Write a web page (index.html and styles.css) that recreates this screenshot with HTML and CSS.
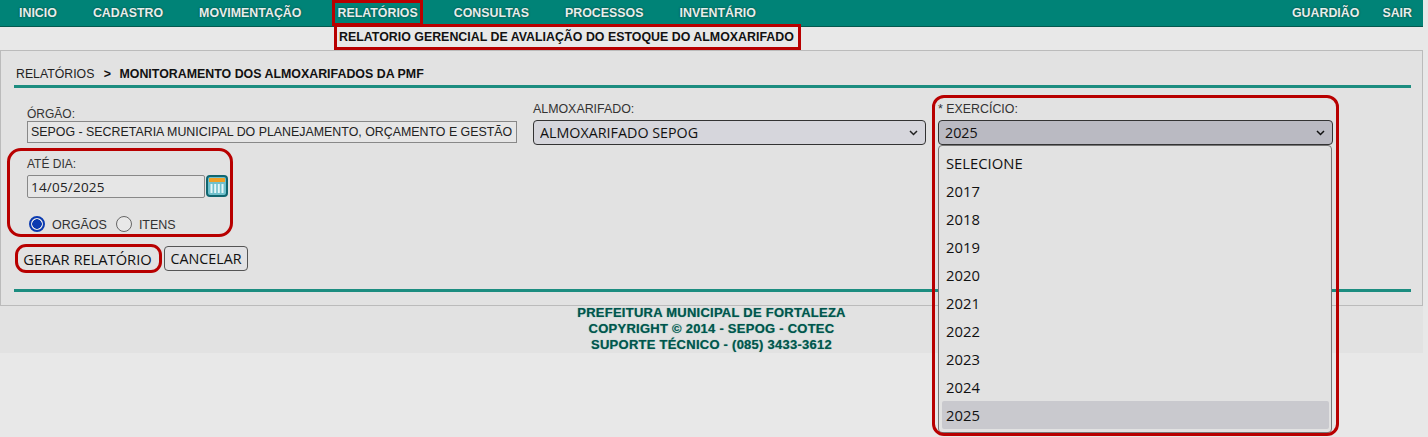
FILE: index.html
```html
<!DOCTYPE html>
<html lang="en">
  <head>
    <meta charset="UTF-8" />
    <title>Monitoramento dos Almoxarifados da PMF</title>
    <link rel="stylesheet" href="styles.css">
  </head>
  <body>
    <div class="page">
      <nav class="topbar">
        <a class="top-link">INICIO</a>
        <a class="top-link">CADASTRO</a>
        <a class="top-link">MOVIMENTAÇÃO</a>
        <a class="top-link marked">RELATÓRIOS</a>
        <a class="top-link">CONSULTAS</a>
        <a class="top-link">PROCESSOS</a>
        <a class="top-link">INVENTÁRIO</a>
        <div class="top-right">
          <a class="top-link">GUARDIÃO</a>
          <a class="top-link">SAIR</a>
        </div>
      </nav>
      <div class="submenu">
        <a class="sub-link">RELATORIO GERENCIAL DE AVALIAÇÃO DO ESTOQUE DO ALMOXARIFADO</a>
      </div>

      <main class="panel">
        <div class="breadcrumb">
          <span>RELATÓRIOS</span>
          <b class="sep">&gt;</b>
          <b>MONITORAMENTO DOS ALMOXARIFADOS DA PMF</b>
        </div>

        <form class="report-form">
          <div class="fields">
            <div class="field orgao">
              <label>ÓRGÃO:</label>
              <input class="text-box" type="text" readonly value="SEPOG - SECRETARIA MUNICIPAL DO PLANEJAMENTO, ORÇAMENTO E GESTÃO">
            </div>
            <div class="field almox">
              <label>ALMOXARIFADO:</label>
              <div class="combo-wrap">
                <select class="combo">
                  <option>ALMOXARIFADO SEPOG</option>
                </select>
                <svg class="chevron" width="9" height="6" viewBox="0 0 9 6"><path d="M1 1l3.5 3.5L8 1" fill="none" stroke="#222" stroke-width="1.5"/></svg>
              </div>
            </div>
            <div class="field exercicio">
              <div class="red-frame"></div>
              <label>* EXERCÍCIO:</label>
              <div class="combo-wrap">
                <select class="combo open">
                  <option>2025</option>
                </select>
                <svg class="chevron" width="9" height="6" viewBox="0 0 9 6"><path d="M1 1l3.5 3.5L8 1" fill="none" stroke="#111" stroke-width="1.5"/></svg>
              </div>
              <ul class="dropdown">
                <li>SELECIONE</li>
                <li>2017</li>
                <li>2018</li>
                <li>2019</li>
                <li>2020</li>
                <li>2021</li>
                <li>2022</li>
                <li>2023</li>
                <li>2024</li>
                <li class="current">2025</li>
              </ul>
            </div>
          </div>

          <div class="date-group">
            <label>ATÉ DIA:</label>
            <div class="date-row">
              <input class="date-box" type="text" value="14/05/2025">
              <svg class="cal-icon" width="22" height="22" viewBox="0 0 22 22">
                <rect x="1" y="1" width="20" height="20" rx="3" fill="#6fc0cc" stroke="#0f6670" stroke-width="2"/>
                <rect x="3" y="3" width="16" height="4" fill="#ee9f26"/>
                <path d="M5.5 9v9M9.2 9v9M12.8 9v9M16.5 9v9" stroke="#e4f6f8" stroke-width="2"/>
              </svg>
            </div>
            <div class="radio-row">
              <input type="radio" name="tipo" id="tipoOrgaos" checked>
              <label for="tipoOrgaos">ORGÃOS</label>
              <input type="radio" name="tipo" id="tipoItens">
              <label for="tipoItens">ITENS</label>
            </div>
          </div>

          <div class="actions">
            <span class="button-ring"><button type="button" class="btn plain">GERAR RELATÓRIO</button></span>
            <button type="button" class="btn cancel">CANCELAR</button>
          </div>
        </form>
      </main>

      <footer class="footer">
        <div>PREFEITURA MUNICIPAL DE FORTALEZA</div>
        <div>COPYRIGHT © 2014 - SEPOG - COTEC</div>
        <div>SUPORTE TÉCNICO - (085) 3433-3612</div>
      </footer>
    </div>
  </body>
</html>
```

FILE: styles.css
```css
html, body {
  margin: 0;
  padding: 0;
  height: 100%;
  background: #e8e8e8;
  overflow: hidden;
}
body {
  font-family: "Liberation Sans", Arial, sans-serif;
  color: #222;
}
.page {
  width: 1423px;
}

/* top menu */
.topbar {
  height: 27px;
  box-sizing: border-box;
  display: flex;
  align-items: center;
  gap: 36px;
  padding: 0 11px 0 19px;
  background: #008377;
  border-bottom: 1px solid #04594f;
}
.top-link {
  position: relative;
  font-size: 12.4px;
  font-weight: bold;
  color: #e6eeec;
  text-shadow: 0 0 2px #0a3a33;
}
.top-link.marked::after {
  content: "";
  position: absolute;
  top: -6px;
  bottom: -6px;
  left: -5px;
  right: -5px;
  border: 3px solid #b80000;
}
.top-right {
  display: flex;
  gap: 23px;
  margin-left: auto;
}
.submenu {
  height: 23px;
  display: flex;
  align-items: flex-start;
  padding-left: 334px;
}
.sub-link {
  position: relative;
  box-sizing: border-box;
  height: 26px;
  margin-top: -3px;
  padding: 0 4px 0 2px;
  border: 3px solid #b80000;
  font-size: 12.4px;
  font-weight: bold;
  line-height: 20px;
  color: #111;
}

/* main panel */
.panel {
  box-sizing: border-box;
  height: 256px;
  padding: 0 11px 0 6px;
  background: #e2e2e2;
  border: 1px solid #bbb;
}
.breadcrumb {
  box-sizing: border-box;
  height: 37px;
  margin-left: 7px;
  padding: 16px 0 0 2px;
  border-bottom: 3px solid #1c8d80;
  font-size: 12.3px;
  line-height: 15px;
  color: #222;
}
.breadcrumb b {
  color: #111;
  font-size: 12.4px;
}
.breadcrumb .sep {
  margin: 0 5px 0 6px;
}
.report-form {
  height: 201px;
  border-bottom: 3px solid #1c8d80;
  margin-left: 7px;
}
.fields {
  display: grid;
  grid-template-columns: 506px 405px 395px;
  padding-left: 13px;
  height: 60px;
}
.field {
  position: relative;
  display: flex;
  flex-direction: column;
}
.field label {
  font-size: 12px;
  line-height: 14px;
  color: #333;
}
.field.orgao {
  padding-top: 19px;
}
.field.almox, .field.exercicio {
  padding-top: 14px;
}
.field.almox label, .field.exercicio label {
  margin-bottom: 4px;
  font-size: 12.4px;
}
.text-box {
  box-sizing: border-box;
  width: 490px;
  height: 22px;
  padding: 0 3px;
  background: #e6e6e6;
  border: 1px solid #888;
  border-radius: 0;
  font-family: "Liberation Sans", Arial, sans-serif;
  font-size: 12.4px;
  color: #222;
  outline: none;
}
.combo-wrap {
  position: relative;
  display: flex;
}
.combo {
  box-sizing: border-box;
  height: 25px;
  padding-left: 6px;
  background-color: #d6d6dc;
  border: 1px solid #333;
  border-radius: 4px;
  font-family: "Open Sans", sans-serif;
  font-size: 14.3px;
  color: #111;
  appearance: none;
}
.field.almox .combo {
  width: 393px;
}
.combo.open {
  width: 395px;
  background-color: #babac2;
}
.chevron {
  position: absolute;
  top: 10px;
  right: 8px;
}
.field.almox .chevron {
  right: 20px;
}
.dropdown {
  position: absolute;
  top: 57px;
  left: 0;
  width: 394px;
  height: 288px;
  box-sizing: border-box;
  margin: 0;
  padding: 3px 3px;
  list-style: none;
  background: #e2e2e2;
  border: 1px solid #777;
  border-radius: 4px;
  z-index: 5;
}
.dropdown li {
  height: 28px;
  padding-left: 4px;
  font-family: "Open Sans", sans-serif;
  font-size: 14.8px;
  line-height: 28px;
  color: #111;
}
.dropdown li.current {
  width: 383px;
  background: #c9c9ce;
  border-radius: 2px;
}
.red-frame {
  position: absolute;
  top: 7px;
  left: -6px;
  width: 407px;
  height: 341px;
  box-sizing: border-box;
  border: 3px solid #b80000;
  border-radius: 12px;
  z-index: 6;
  pointer-events: none;
}

/* date block */
.date-group {
  box-sizing: border-box;
  width: 226px;
  height: 89px;
  padding: 6px 0 0 17px;
  border: 3px solid #b80000;
  border-radius: 14px;
  margin-left: -7px;
}
.date-group > label {
  display: block;
  font-size: 12px;
  line-height: 14px;
  color: #333;
}
.date-row {
  display: flex;
  align-items: flex-start;
  gap: 1px;
  margin-top: 4px;
}
.date-box {
  box-sizing: border-box;
  width: 178px;
  height: 23px;
  padding: 0 3px;
  background: #e6e6e6;
  border: 1px solid #888;
  border-radius: 2px;
  font-family: "Open Sans", sans-serif;
  font-size: 13.5px;
  letter-spacing: 0.2px;
  color: #222;
  outline: none;
}
.radio-row {
  display: flex;
  align-items: center;
  margin-top: 17px;
  font-size: 12.5px;
  color: #333;
}
.radio-row input {
  box-sizing: border-box;
  appearance: none;
  width: 16px;
  height: 16px;
  margin: 0 0 0 2px;
  background: #e8e8e8;
  border: 1px solid #666;
  border-radius: 50%;
}
.radio-row input:checked {
  border: 2px solid #0b3bb0;
  background: radial-gradient(circle, #0b3bb0 0 4.5px, #e8e8e8 5px);
}
.radio-row label {
  margin: 3px 7px 0 7px;
}

/* buttons */
.actions {
  display: flex;
  align-items: center;
  gap: 2px;
  margin-top: 7px;
  margin-left: 1px;
}
.button-ring {
  display: flex;
  align-items: center;
  justify-content: center;
  box-sizing: border-box;
  width: 147px;
  height: 29px;
  padding-right: 2px;
  border: 3px solid #b80000;
  border-radius: 11px;
}
.btn {
  box-sizing: border-box;
  height: 25px;
  padding: 0 4px;
  background: #e2e2e4;
  border: 1px solid #555;
  border-radius: 4px;
  font-family: "Open Sans", sans-serif;
  font-size: 14.3px;
  color: #111;
}
.btn.cancel {
  width: 84px;
}
.btn.plain {
  border: none;
  background: none;
  padding: 0;
  font-size: 14.7px;
}

/* footer */
.footer {
  display: flow-root;
  height: 47px;
  background: #e2e2e2;
  text-align: center;
  font-size: 13px;
  font-weight: bold;
  line-height: 16px;
  letter-spacing: 0.25px;
  color: #00564d;
  text-shadow: 0 0 1px #5f9f96;
}
.footer div:first-child {
  margin-top: -1px;
}
```
